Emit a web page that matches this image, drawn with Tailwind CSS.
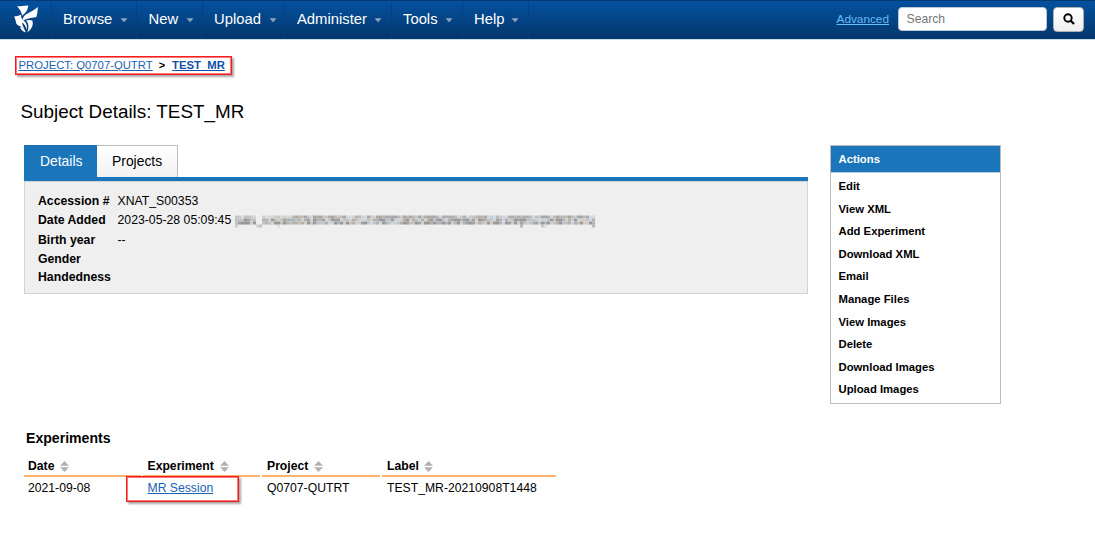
<!DOCTYPE html>
<html lang="en">
<head>
<meta charset="utf-8">
<title>Subject Details</title>
<script src="https://cdn.jsdelivr.net/npm/@tailwindcss/browser@4"></script>
</head>
<body class="bg-white text-black font-['Liberation_Sans',Arial,sans-serif] w-[1095px] h-[559px] overflow-hidden">
<svg class="hidden">
  <symbol id="caret" viewBox="0 0 8 5"><path d="M.5.3h7L4 4.3z" fill="#8fa5bd"/></symbol>
  <symbol id="sort" viewBox="0 0 9 11"><path d="M4.5 0 9 4.8H0zM0 6.2h9L4.5 11z" fill="#b1b1b1"/></symbol>
</svg>
<header class="h-10 pt-px flex items-start bg-linear-to-b from-[#0451a0] to-[#04376b] border-t border-t-[#033a73] border-b border-b-[#c9dcec] text-white text-[14.8px]">
  <a class="w-[52px] h-[37px] shrink-0 border-r border-[#04407e] block">
    <svg class="ml-[13px] mt-[3px]" width="26" height="29" viewBox="0 0 26 29" fill="#fff">
      <path d="M4 1.300C7.500 1.600 11 .2 15.200.4C15 3.500 13.800 6.500 11.800 8.200L9 10.800C8.800 7.500 6.800 4.200 4 1.300z"/>
      <path d="M25 2C24.400 5 24.800 8.500 23.200 12.200C20 12.300 15.500 12.800 9.800 15.800C9.500 13.500 10.500 11.400 12.500 9.800C16.500 7.300 20.800 5.500 25 2z"/>
      <path d="M1 11.600C3.500 11.300 5.800 10.700 7.800 9.800C8 12 8.600 14 10.200 15.200C13.500 17.500 14.500 20.500 13.600 25C12.800 21.500 11.500 19 9.200 17.500C9 19.800 10.500 21.500 11.500 24.500C9 21 5 21.500 3.300 18.500C2.600 16 2.400 13.500 1 11.600z"/>
      <path d="M13 15.500C15 14.800 17.500 14.800 19.300 15.600C20.500 19.500 19.500 24 14.200 27.300C16 23 16 18.500 13 15.500z"/>
      <path d="M7.200 21.800C9.800 22.200 11.500 23.500 12.800 27.600C9.500 26.500 7.500 24.500 7.200 21.800z"/>
    </svg>
  </a>
  <nav class="flex h-[37px] leading-[35px]">
    <a class="w-[85px] pl-[11px] flex border-r border-[#04407e]">Browse<svg class="ml-[8px] mt-[16px]" width="8" height="5"><use href="#caret"/></svg></a>
    <a class="w-[66px] pl-[11.500px] flex border-r border-[#04407e]">New<svg class="ml-[8px] mt-[16px]" width="8" height="5"><use href="#caret"/></svg></a>
    <a class="w-[82px] pl-[11px] flex border-r border-[#04407e]">Upload<svg class="ml-[8px] mt-[16px]" width="8" height="5"><use href="#caret"/></svg></a>
    <a class="w-[107px] pl-[12px] flex border-r border-[#04407e]">Administer<svg class="ml-[7px] mt-[16px]" width="8" height="5"><use href="#caret"/></svg></a>
    <a class="w-[71px] pl-[11px] flex border-r border-[#04407e]">Tools<svg class="ml-[7px] mt-[16px]" width="8" height="5"><use href="#caret"/></svg></a>
    <a class="w-[66px] pl-[11px] flex border-r border-[#04407e]">Help<svg class="ml-[7px] mt-[16px]" width="8" height="5"><use href="#caret"/></svg></a>
  </nav>
  <div class="ml-auto flex pr-[11px] pt-[5px]">
    <a class="text-[11.800px] leading-[24px] underline text-[#62bdf8] mr-[9px]">Advanced</a>
    <div class="w-[149px] h-6 rounded-[4px] bg-white border border-[#b9c7d6] pl-[7.500px] text-[12.200px] leading-[22px] text-[#757575]">Search</div>
    <div class="ml-[6px] w-[31px] h-[25px] rounded-[4px] border border-[#b0b0b0] bg-linear-to-b from-white to-[#efefef] flex items-center justify-center">
      <svg class="-mt-px" width="12" height="12" viewBox="0 0 12 12" fill="none" stroke="#000" stroke-width="1.900"><circle cx="5" cy="5" r="3.700"/><path d="m7.700 7.700 3.300 3.300" stroke-width="2.300"/></svg>
    </div>
  </div>
</header>

<div class="mt-4 ml-[15px] w-[217px] h-[19px] border border-[#f51d1d] outline outline-[#f51d1d]/60 -outline-offset-2 shadow-[2px_2px_2px_rgba(0,0,0,0.35)] pl-[2.500px] text-[11.300px] leading-[16px] whitespace-nowrap flex">
  <a class="underline text-[#1a5fb4]">PROJECT: Q0707-QUTRT</a><span class="ml-[6px] font-bold text-[11px]">&gt;</span><a class="ml-[7px] underline font-bold text-[#0f4fa8]">TEST_MR</a>
</div>

<h1 class="mt-[26px] ml-[20.500px] h-[22px] leading-[22px] text-[18.850px]">Subject Details: TEST_MR</h1>

<main class="flex mt-[22px] ml-6">
  <section class="w-[784px]">
    <div class="flex h-8 text-[13.900px] leading-[31px]">
      <div class="w-[73px] pl-4 bg-[#1a75bb] text-white border-t border-[#1a6bab]">Details</div>
      <div class="w-[81px] pl-[15px] bg-linear-to-b from-white to-[#f2f2f2] border-t border-r border-[#bcbcbc]">Projects</div>
    </div>
    <div class="h-1 bg-[#1a75bb]"></div>
    <div class="h-[113px] bg-[#efefef] border border-[#d2d2d2] pl-[13px] pt-[10px] text-[12.250px] grid grid-cols-[79.500px_1fr] grid-rows-[19px_20px_19px_18px_19px] leading-[19px]">
      <b>Accession #</b><span>XNAT_S00353</span>
      <b>Date Added</b><span class="flex">2023-05-28 05:09:45<svg id="mosaic" class="ml-[3px] mt-[3px] blur-[0.500px]" width="364" height="15"></svg></span>
      <b>Birth year</b><span>--</span>
      <b>Gender</b><span></span>
      <b>Handedness</b><span></span>
    </div>
  </section>
  <aside class="ml-[22px] w-[171px] h-[259px] border border-[#bdbdbd] text-[11.300px] font-bold">
    <div class="h-[27px] bg-[#1a75bb] text-white pl-[7.500px] leading-[26px] border-b border-[#b9cbd9]">Actions</div>
    <ul class="pl-[7.500px] pt-[2px] leading-[22.600px]">
      <li>Edit</li><li>View XML</li><li>Add Experiment</li><li>Download XML</li><li>Email</li><li>Manage Files</li><li>View Images</li><li>Delete</li><li>Download Images</li><li>Upload Images</li>
    </ul>
  </aside>
</main>

<h2 class="mt-[24px] ml-[26px] h-5 leading-5 font-bold text-[14.100px]">Experiments</h2>
<div class="mt-[9px] ml-[24px] grid grid-cols-[117px_117px_118px_174px] gap-x-[2px] text-[12.200px] w-[532px]">
  <div class="h-[20px] pl-1 leading-[18px] font-bold border-b-2 border-[#fbb26c] flex">Date<svg class="ml-[6px] mt-[4px]" width="9" height="11"><use href="#sort"/></svg></div>
  <div class="h-[20px] pl-[4.500px] leading-[18px] font-bold border-b-2 border-[#fbb26c] flex">Experiment<svg class="ml-[6px] mt-[4px]" width="9" height="11"><use href="#sort"/></svg></div>
  <div class="h-[20px] pl-[5px] leading-[18px] font-bold border-b-2 border-[#fbb26c] flex">Project<svg class="ml-[6px] mt-[4px]" width="9" height="11"><use href="#sort"/></svg></div>
  <div class="h-[20px] pl-[5px] leading-[18px] font-bold border-b-2 border-[#fbb26c] flex">Label<svg class="ml-[5px] mt-[4px]" width="9" height="11"><use href="#sort"/></svg></div>
  <div class="pl-1 leading-[23px]">2021-09-08</div>
  <div class="relative pl-[4.500px] leading-[23px]"><a class="underline text-[#1a5fb4]">MR Session</a>
    <div class="absolute -left-[17px] -top-px w-[113px] h-[26px] border border-[#f51d1d] outline outline-[#f51d1d]/60 -outline-offset-2 shadow-[2px_2px_2px_rgba(0,0,0,0.35)]"></div>
  </div>
  <div class="pl-[5px] leading-[23px]">Q0707-QUTRT</div>
  <div class="pl-[5px] leading-[23px]">TEST_MR-20210908T1448</div>
</div>
<script>
// Pixelated strip that hides the user name
const strip = document.getElementById('mosaic');
const tones = ['#a3a3a3','#d3cec8','#b0b3b7','#c4c0bb','#9c9894','#bdc5cd','#969a9f','#cdd6de','#b9b0a6'];
let seed = 11, cells = '';
for (let x = 0; x < 120; x++) for (let y = 0; y < 4; y++) {
  seed = (seed * 1103515245 + 12345) % 2147483648;
  const r = Math.floor(seed / 65536);
  const descender = x === 0 || x === 119 || (x > 6 && x < 9) || x === 14 || x === 95 || x === 102 || x === 103;
  if (y === 3 && !descender) continue;
  if (x > 6 && x < 9 && y < 3) continue;
  const soft = y === 3 ? .6 : y === 0 && x < 17 ? .5 : y === 0 ? .85 : 1;
  cells += `<rect x="${x*3+1}" y="${y*3+1.5}" width="3.05" height="3.05" fill="${tones[r % 9]}" opacity="${soft}"/>`;
}
strip.innerHTML = cells;
</script>
</body>
</html>
